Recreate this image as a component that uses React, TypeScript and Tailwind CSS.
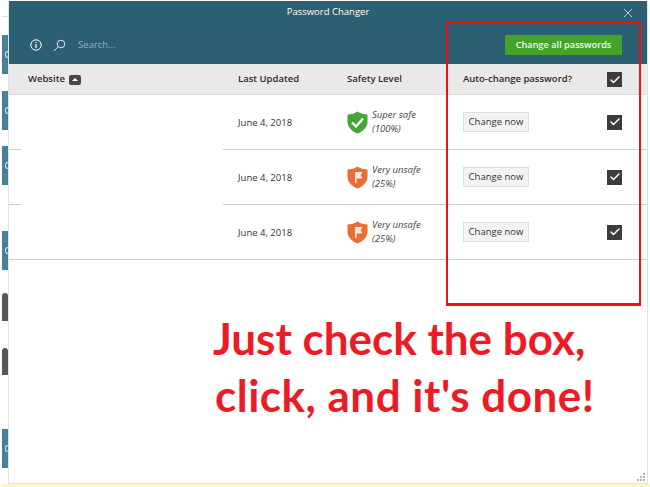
import { Check } from 'lucide-react';

const rows = [
  { safe: true, label: 'Super safe', pct: '(100%)' },
  { safe: false, label: 'Very unsafe', pct: '(25%)' },
  { safe: false, label: 'Very unsafe', pct: '(25%)' },
];

function CheckBox() {
  return (
    <div className="w-[15px] h-[15px] bg-[#3c3c3c] flex items-center justify-center shrink-0">
      <Check size={12} strokeWidth={3} className="text-white" />
    </div>
  );
}

function Shield({ safe }: { safe: boolean }) {
  return (
    <svg width="21" height="23" viewBox="0 0 21 23" className="shrink-0">
      <path
        d="M10.5 0.5 C13 2.5 17 3.5 20.5 3.5 L20.5 11 C20.5 16.5 15.5 20.5 10.5 22.5 C5.5 20.5 0.5 16.5 0.5 11 L0.5 3.5 C4 3.5 8 2.5 10.5 0.5 Z"
        fill={safe ? '#46a537' : '#ea6d35'}
      />
      {safe ? (
        <path d="M5 11.5 L9 15.5 L16 7.5" fill="none" stroke="#fff" strokeWidth="2.4" />
      ) : (
        <path d="M8 6 L8 17 L9.6 17 L9.6 12.5 L15.5 12.5 L13.8 9.6 L15.5 6 Z" fill="#f8e9dc" />
      )}
    </svg>
  );
}

// slice of a tile from the page behind the window
function TealTab({ gap }: { gap: string }) {
  return (
    <div className={`h-[39px] shrink-0 bg-[#4b7f95] flex items-center justify-end ${gap}`}>
      <div className="w-[3px] h-[7px] rounded-l-full border border-r-0 border-[#cfdde3]" />
    </div>
  );
}

// background page peeking out on the left of the window
function LeftStrip() {
  return (
    <div className="w-2 h-[484px] shrink-0 pl-[2px] flex flex-col">
      <div className="h-[17px] shrink-0 border-b border-[#dddddd]" />
      <TealTab gap="mt-[18px]" />
      <TealTab gap="mt-[17px]" />
      <TealTab gap="mt-[16px]" />
      <TealTab gap="mt-[46px]" />
      <div className="h-[28px] shrink-0 mt-[23px] bg-[#5a5655] rounded-t-sm" />
      <div className="h-[27px] shrink-0 mt-[27px] bg-[#5a5655] rounded-t-sm" />
      <TealTab gap="mt-[54px]" />
    </div>
  );
}

export default function App() {
  return (
    <div className="relative w-[650px] h-[487px] bg-white overflow-hidden font-['Open_Sans',sans-serif] flex items-start">
      <LeftStrip />
      <div className="w-[640px] h-[483px] mt-px bg-white border-l border-r border-b border-[#dfe3e5] flex flex-col shrink-0 relative">
        {/* title bar and toolbar */}
        <div className="h-[63px] bg-[#2c5f72] shrink-0 flex flex-col">
          <div className="h-[23px] flex items-center justify-center relative">
            <span className="text-[9.5px] text-white">Password Changer</span>
            <svg width="10" height="10" viewBox="0 0 10 10" className="absolute right-[14px] top-[7px]">
              <path d="M1 1 L9 9 M9 1 L1 9" stroke="#b9cbd3" strokeWidth="1" />
            </svg>
          </div>
          <div className="flex items-center h-[20px] mt-[11px] pl-[21px] pr-[25px]">
            <svg width="12" height="12" viewBox="0 0 12 12" className="shrink-0">
              <circle cx="6" cy="6" r="5.2" fill="none" stroke="#fff" strokeWidth="1" />
              <path d="M6 5 L6 9 M6 3 L6 4" stroke="#fff" strokeWidth="1.2" />
            </svg>
            <svg width="13" height="13" viewBox="0 0 13 13" className="ml-[11px] shrink-0">
              <circle cx="8" cy="5" r="3.8" fill="none" stroke="#dbe6ea" strokeWidth="1" />
              <path d="M5.2 7.8 L1 12" stroke="#dbe6ea" strokeWidth="1" />
            </svg>
            <span className="ml-[12px] text-[9.5px] text-[#8fb0bd]">Search...</span>
            <div className="ml-auto w-[117px] h-[20px] bg-[#45a32b] flex items-center justify-center text-[9.2px] font-semibold text-[#eef7ea]">
              Change all passwords
            </div>
          </div>
        </div>

        {/* table header */}
        <div className="h-[31px] shrink-0 bg-[#e9e9e9] border-b border-[#dcdcdc] flex items-center pt-px text-[9.5px] font-semibold text-[#2b2b2b]">
          <div className="w-[229px] pl-[19px] flex items-center gap-[4px]">
            Website
            <div className="w-[12px] h-[10px] rounded-[2px] bg-[#4a4646] flex items-center justify-center">
              <div className="w-0 h-0 border-x-[3px] border-x-transparent border-b-[3px] border-b-white" />
            </div>
          </div>
          <div className="w-[109px]">Last Updated</div>
          <div className="w-[116px]">Safety Level</div>
          <div className="w-[144px]">Auto-change password?</div>
          <CheckBox />
        </div>

        {/* rows */}
        {rows.map((row, i) => (
          <div key={i} className="h-[55px] shrink-0 flex">
            <div className="w-[214px] flex shrink-0">
              <div className="w-3 h-full border-b border-[#cfcfcf]" />
              <div className={i === 2 ? 'flex-1 border-b border-[#cfcfcf]' : 'flex-1'} />
            </div>
            <div className="flex-1 flex items-center border-b border-[#cfcfcf]">
              <div className="w-[124px] pl-[15px] pt-[2px] text-[9.5px] text-[#333]">June 4, 2018</div>
              <div className="w-[116px] flex items-center gap-[4px]">
                <Shield safe={row.safe} />
                <div className="text-[9.5px] italic leading-[14px] text-[#444]">
                  <div>{row.label}</div>
                  <div>{row.pct}</div>
                </div>
              </div>
              <div className="w-[144px]">
                <div className="w-[66px] h-[20px] bg-[#f3f3f3] border border-[#dedede] flex items-center justify-center text-[9.5px] text-[#333]">
                  Change now
                </div>
              </div>
              <CheckBox />
            </div>
          </div>
        ))}

        {/* callout */}
        <div className="flex-1 flex flex-col items-start pt-[50px] pl-[204px] font-['Lato',sans-serif] font-bold text-[44px] leading-[57px] text-[#ed1c24]">
          <div>Just check the box,</div>
          <div className="ml-[2px] tracking-[0.5px]">click, and it's done!</div>
        </div>

        {/* resize grip */}
        <svg width="10" height="10" viewBox="0 0 10 10" className="absolute right-[1px] bottom-[1px]">
          <path d="M7 1h2v2h-2z M4 4h2v2h-2z M7 4h2v2h-2z M1 7h2v2h-2z M4 7h2v2h-2z M7 7h2v2h-2z" fill="#b5b5b5" />
        </svg>
      </div>

      {/* red highlight drawn over the screenshot */}
      <div className="absolute left-[446px] top-[22px] w-[195px] h-[284px] border-[2px] border-b-[3px] border-[#ee1111]" />
      {/* yellow sliver along the bottom */}
      <div className="absolute left-[2px] bottom-0 w-[648px] h-[3px] bg-[#fbf8c0]" />
    </div>
  );
}
